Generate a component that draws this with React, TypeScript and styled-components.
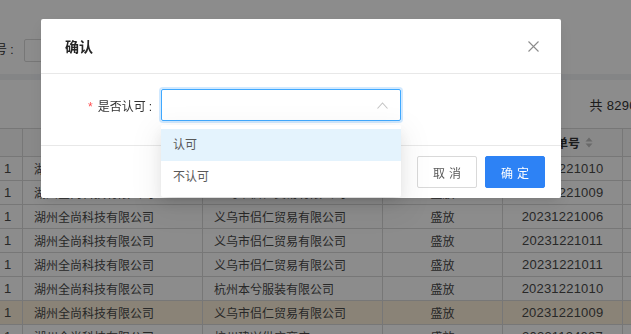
import styled, { createGlobalStyle } from 'styled-components';

const GlobalStyle = createGlobalStyle`
  html, body {
    margin: 0;
    padding: 0;
  }
  body {
    font-family: 'Liberation Sans', 'Noto Sans CJK SC', sans-serif;
    background: #f0f2f5;
    color: #333;
    overflow: hidden;
  }
`;

type Row = {
  id: string;
  buyer: string;
  seller: string;
  brand: string;
  no: string;
  marked?: boolean;
};

const rows: Row[] = [
  { id: '1', buyer: '湖州全尚科技有限公司', seller: '义乌市侣仁贸易有限公司', brand: '盛放', no: '20231221010' },
  { id: '1', buyer: '湖州全尚科技有限公司', seller: '义乌市侣仁贸易有限公司', brand: '盛放', no: '20231221009' },
  { id: '1', buyer: '湖州全尚科技有限公司', seller: '义乌市侣仁贸易有限公司', brand: '盛放', no: '20231221006' },
  { id: '1', buyer: '湖州全尚科技有限公司', seller: '义乌市侣仁贸易有限公司', brand: '盛放', no: '20231221011' },
  { id: '1', buyer: '湖州全尚科技有限公司', seller: '义乌市侣仁贸易有限公司', brand: '盛放', no: '20231221011' },
  { id: '1', buyer: '湖州全尚科技有限公司', seller: '杭州本兮服装有限公司', brand: '盛放', no: '20231221010' },
  { id: '1', buyer: '湖州全尚科技有限公司', seller: '义乌市侣仁贸易有限公司', brand: '盛放', no: '20231221009', marked: true },
  { id: '1', buyer: '湖州全尚科技有限公司', seller: '杭州建兴供应商店', brand: '盛放', no: '20231124007' },
];

const SortIcon = () => (
  <svg width='8' height='11' viewBox='0 0 8 11'>
    <path d='M4 0.5 L7.5 4.5 H0.5 Z' fill='#bfbfbf' />
    <path d='M4 10.5 L7.5 6.5 H0.5 Z' fill='#bfbfbf' />
  </svg>
);

const CloseIcon = () => (
  <svg width='11' height='11' viewBox='0 0 11 11'>
    <path d='M0.5 0.5 L10.5 10.5 M10.5 0.5 L0.5 10.5' stroke='#8c8c8c' strokeWidth='1.1' fill='none' />
  </svg>
);

const ArrowUp = () => (
  <svg width='11' height='7' viewBox='0 0 11 7'>
    <path d='M0.5 6.5 L5.5 1 L10.5 6.5' stroke='#c4c4c4' strokeWidth='1.1' fill='none' />
  </svg>
);

export default function App() {
  return (
    <>
      <GlobalStyle />
      <SPage>
        <SFilterCard>
          <SFilterLabel>号 :</SFilterLabel>
          <SFilterInput />
        </SFilterCard>
        <STableCard>
          <SToolbar>
            <STotal>共 8290 条</STotal>
          </SToolbar>
          <SHeadRow>
            <SCell />
            <SCell />
            <SCell />
            <SCell />
            <SCell $center>
              <SHeadText>入库单号</SHeadText>
              <SortIcon />
            </SCell>
            <SCell />
          </SHeadRow>
          {rows.map((r, i) => (
            <SRow key={i} $marked={r.marked}>
              <SCell $num>{r.id}</SCell>
              <SCell>{r.buyer}</SCell>
              <SCell>{r.seller}</SCell>
              <SCell $center>{r.brand}</SCell>
              <SCell $center $num>
                {r.no}
              </SCell>
              <SCell />
            </SRow>
          ))}
        </STableCard>
      </SPage>
      <SMask />
      <SModal>
        <SModalHeader>
          <STitle>确认</STitle>
          <SClose>
            <CloseIcon />
          </SClose>
        </SModalHeader>
        <SModalBody>
          <SFormItem>
            <SLabel>
              <SRequired>*</SRequired>是否认可<SColon>:</SColon>
            </SLabel>
            <SSelectWrap>
              <SSelect>
                <ArrowUp />
              </SSelect>
              <SDropdown>
                <SOption $active>认可</SOption>
                <SOption>不认可</SOption>
              </SDropdown>
            </SSelectWrap>
          </SFormItem>
        </SModalBody>
        <SModalFooter>
          <SButton>取消</SButton>
          <SButton $primary>确定</SButton>
        </SModalFooter>
      </SModal>
    </>
  );
}

const SPage = styled.div`
  width: 680px;
  height: 100vh;
  overflow: hidden;
`;

const SFilterCard = styled.div`
  height: 74px;
  box-sizing: border-box;
  background: #fff;
  padding-top: 39px;
  display: flex;
  align-items: flex-start;
  margin-bottom: 6px;
`;

const SFilterLabel = styled.span`
  font-size: 12px;
  color: #333;
  line-height: 23px;
  margin-left: -5px;
  margin-right: 10px;
`;

const SFilterInput = styled.div`
  width: 200px;
  height: 23px;
  box-sizing: border-box;
  border: 1px solid #d9d9d9;
  border-radius: 2px;
`;

const STableCard = styled.div`
  background: #fff;
`;

const SToolbar = styled.div`
  height: 48px;
  display: flex;
  align-items: center;
  justify-content: flex-end;
  padding-right: 26px;
`;

const STotal = styled.span`
  font-size: 13px;
  color: #333;
  letter-spacing: 0.3px;
`;

const SGridRow = styled.div`
  display: grid;
  grid-template-columns: 23px 180px 180px 120px 120px 1fr;
  box-sizing: border-box;
  border-bottom: 1px solid #d9d9d9;
`;

const SHeadRow = styled(SGridRow)`
  height: 29px;
  border-top: 1px solid #d9d9d9;
  background: #fafafa;
`;

const SRow = styled(SGridRow)<{ $marked?: boolean }>`
  height: 24px;
  background: ${(p) => (p.$marked ? '#fbeed9' : '#fff')};
`;

const SCell = styled.div<{ $center?: boolean; $num?: boolean }>`
  display: flex;
  align-items: center;
  justify-content: ${(p) => (p.$center ? 'center' : 'flex-start')};
  gap: 5px;
  padding: 0 ${(p) => (p.$num && !p.$center ? '4px' : '11px')};
  border-right: 1px solid #d9d9d9;
  font-size: ${(p) => (p.$num ? '13px' : '12px')};
  letter-spacing: ${(p) => (p.$num ? '0.2px' : '0')};
  color: #4a4a4a;
  white-space: nowrap;
  overflow: hidden;
`;

const SHeadText = styled.span`
  font-weight: 700;
  font-size: 12px;
  color: #333;
`;

const SMask = styled.div`
  position: fixed;
  inset: 0;
  background: rgba(0, 0, 0, 0.45);
`;

const SModal = styled.div`
  position: fixed;
  top: 19px;
  left: 41px;
  width: 520px;
  background: #fff;
  border-radius: 2px;
  box-shadow: 0 3px 6px -4px rgba(0, 0, 0, 0.12), 0 6px 16px 0 rgba(0, 0, 0, 0.08);
`;

const SModalHeader = styled.div`
  height: 54px;
  padding-left: 24px;
  display: flex;
  align-items: center;
  justify-content: space-between;
  border-bottom: 1px solid #e8e8e8;
`;

const STitle = styled.div`
  font-size: 14px;
  font-weight: 700;
  color: #262626;
`;

const SClose = styled.div`
  width: 56px;
  height: 54px;
  display: flex;
  align-items: center;
  justify-content: center;
`;

const SModalBody = styled.div`
  padding: 15px 24px 24px;
`;

const SFormItem = styled.div`
  display: flex;
  align-items: center;
  height: 32px;
`;

const SLabel = styled.label`
  width: 96px;
  box-sizing: border-box;
  padding-right: 9px;
  text-align: right;
  font-size: 12px;
  color: #333;
`;

const SRequired = styled.span`
  color: #ff4d4f;
  margin-right: 5px;
`;

const SColon = styled.span`
  margin-left: 3px;
`;

const SSelectWrap = styled.div`
  position: relative;
  width: 240px;
`;

const SSelect = styled.div`
  height: 32px;
  box-sizing: border-box;
  border: 1px solid #40a9ff;
  border-radius: 2px;
  box-shadow: 0 0 0 2px rgba(24, 144, 255, 0.2);
  display: flex;
  align-items: center;
  justify-content: flex-end;
  padding-right: 12px;
`;

const SDropdown = styled.div`
  position: absolute;
  top: 36px;
  left: 0;
  width: 100%;
  padding: 4px 0;
  background: #fff;
  border-radius: 2px;
  box-shadow: 0 3px 6px -4px rgba(0, 0, 0, 0.12), 0 6px 16px 0 rgba(0, 0, 0, 0.08),
    0 9px 28px 8px rgba(0, 0, 0, 0.05);
  z-index: 2;
`;

const SOption = styled.div<{ $active?: boolean }>`
  height: 32px;
  line-height: 32px;
  padding: 0 12px;
  font-size: 12px;
  color: #595959;
  background: ${(p) => (p.$active ? '#e4f3fd' : '#fff')};
`;

const SModalFooter = styled.div`
  border-top: 1px solid #e8e8e8;
  padding: 10px 16px;
  display: flex;
  justify-content: flex-end;
  gap: 8px;
`;

const SButton = styled.button<{ $primary?: boolean }>`
  height: 32px;
  width: 60px;
  padding: 0;
  border-radius: 2px;
  font-family: inherit;
  font-size: 12px;
  letter-spacing: 4px;
  text-indent: 4px;
  cursor: pointer;
  border: 1px solid ${(p) => (p.$primary ? '#2d82f5' : '#d9d9d9')};
  background: ${(p) => (p.$primary ? '#2d82f5' : '#fff')};
  color: ${(p) => (p.$primary ? '#fff' : '#595959')};
`;
